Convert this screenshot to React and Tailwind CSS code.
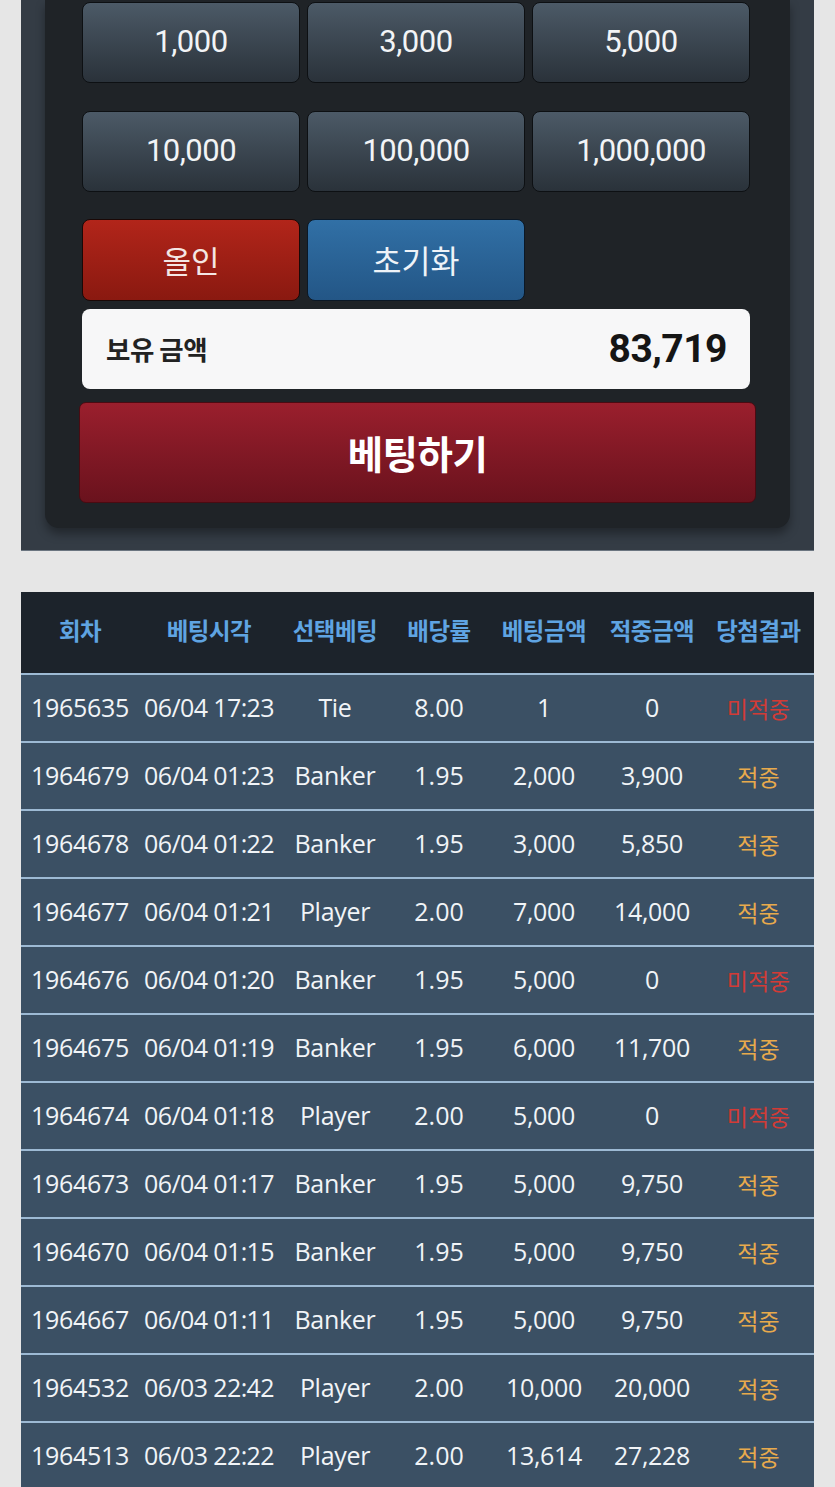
import React from "react";

const chips = ["1,000", "3,000", "5,000", "10,000", "100,000", "1,000,000"];

const rows = [
  ["1965635", "06/04 17:23", "Tie", "8.00", "1", "0", false],
  ["1964679", "06/04 01:23", "Banker", "1.95", "2,000", "3,900", true],
  ["1964678", "06/04 01:22", "Banker", "1.95", "3,000", "5,850", true],
  ["1964677", "06/04 01:21", "Player", "2.00", "7,000", "14,000", true],
  ["1964676", "06/04 01:20", "Banker", "1.95", "5,000", "0", false],
  ["1964675", "06/04 01:19", "Banker", "1.95", "6,000", "11,700", true],
  ["1964674", "06/04 01:18", "Player", "2.00", "5,000", "0", false],
  ["1964673", "06/04 01:17", "Banker", "1.95", "5,000", "9,750", true],
  ["1964670", "06/04 01:15", "Banker", "1.95", "5,000", "9,750", true],
  ["1964667", "06/04 01:11", "Banker", "1.95", "5,000", "9,750", true],
  ["1964532", "06/03 22:42", "Player", "2.00", "10,000", "20,000", true],
  ["1964513", "06/03 22:22", "Player", "2.00", "13,614", "27,228", true],
];

const headers = ["회차", "베팅시각", "선택베팅", "배당률", "베팅금액", "적중금액", "당첨결과"];
const cols = "grid-cols-[118px_140px_112px_96px_114px_102px_111px]";

const kr = { fontFamily: '"Noto Sans CJK KR", "Noto Sans", sans-serif' };
const rob = { fontFamily: 'Roboto, "Noto Sans CJK KR", sans-serif' };
const open = { fontFamily: '"Open Sans", "Noto Sans CJK KR", sans-serif' };

export default function App() {
  return (
    <div className="min-h-[1487px] w-[835px] bg-[#e6e6e6] overflow-hidden">
      {/* outer panel */}
      <div className="mx-[21px] w-[793px] bg-[#343c45] border-b border-[#6b7580] pb-[22px]">
        <div className="mx-[24px] w-[745px] bg-[#1f2327] rounded-b-[14px] shadow-[0_6px_10px_rgba(0,0,0,0.35)] pt-[2px] pb-[25px]">
          <div className="mx-[37px] w-[668px]">
            <div className="grid grid-cols-3 gap-x-[7px] gap-y-[28px]">
              {chips.map((c) => (
                <div
                  key={c}
                  className="h-[81px] rounded-[8px] border border-[#0d1013] bg-gradient-to-b from-[#4c5a67] to-[#2a323a] flex items-center justify-center text-[#f2f4f6] text-[31px] tracking-[-0.5px]"
                  style={rob}
                >
                  {c}
                </div>
              ))}
            </div>
            <div className="grid grid-cols-3 gap-x-[7px] mt-[27px]">
              <div
                className="h-[82px] rounded-[8px] border border-[#1a0806] bg-gradient-to-b from-[#b2251a] to-[#8a1910] flex items-center justify-center text-[#f4e6e4] text-[31px]"
                style={kr}
              >
                올인
              </div>
              <div
                className="h-[82px] rounded-[8px] border border-[#0b1826] bg-gradient-to-b from-[#3170a6] to-[#235686] flex items-center justify-center text-[#eef3f8] text-[31.5px]"
                style={kr}
              >
                초기화
              </div>
            </div>
            <div className="mt-[8px] h-[80px] rounded-[8px] bg-[#f7f7f8] flex items-center justify-between pl-[24px] pr-[23px]">
              <span className="text-[26.5px] font-bold text-[#222] tracking-[-0.5px]" style={kr}>
                보유 금액
              </span>
              <span className="text-[39px] font-bold text-[#151515] tracking-[-0.5px]" style={rob}>
                83,719
              </span>
            </div>
          </div>
          <div className="mx-[34px] mt-[13px] h-[101px] rounded-[7px] border border-[#4a0b12] bg-gradient-to-b from-[#9a1f2d] to-[#6a121d] flex items-center justify-center">
            <span className="text-white text-[38.5px] font-bold tracking-[-0.5px]" style={kr}>
              베팅하기
            </span>
          </div>
        </div>
      </div>

      {/* table */}
      <div className="mx-[21px] mt-[41px] w-[793px]">
        <div className={`grid ${cols} h-[81px] bg-[#1c232b] items-center`}>
          {headers.map((h) => (
            <div key={h} className="text-center text-[23.5px] font-bold text-[#5fa4e2] tracking-[-0.5px] pb-[3px]" style={kr}>
              {h}
            </div>
          ))}
        </div>
        {rows.map((r) => (
          <div
            key={r[0]}
            className={`grid ${cols} h-[68px] border-t-2 border-[#9dbad4] bg-[#3b5064] items-center text-[#f1f4f7] text-[25px]`}
            style={open}
          >
            <div className="text-center tracking-[-0.3px]">{r[0]}</div>
            <div className="text-center tracking-[-0.6px] whitespace-nowrap">{r[1]}</div>
            <div className="text-center tracking-[-0.3px]">{r[2]}</div>
            <div className="text-center">{r[3]}</div>
            <div className="text-center tracking-[-0.3px]">{r[4]}</div>
            <div className="text-center tracking-[-0.3px]">{r[5]}</div>
            <div
              className={`text-center text-[23px] ${r[6] ? "text-[#e8aa4c]" : "text-[#d23b36]"}`}
              style={kr}
            >
              {r[6] ? "적중" : "미적중"}
            </div>
          </div>
        ))}
      </div>
    </div>
  );
}
